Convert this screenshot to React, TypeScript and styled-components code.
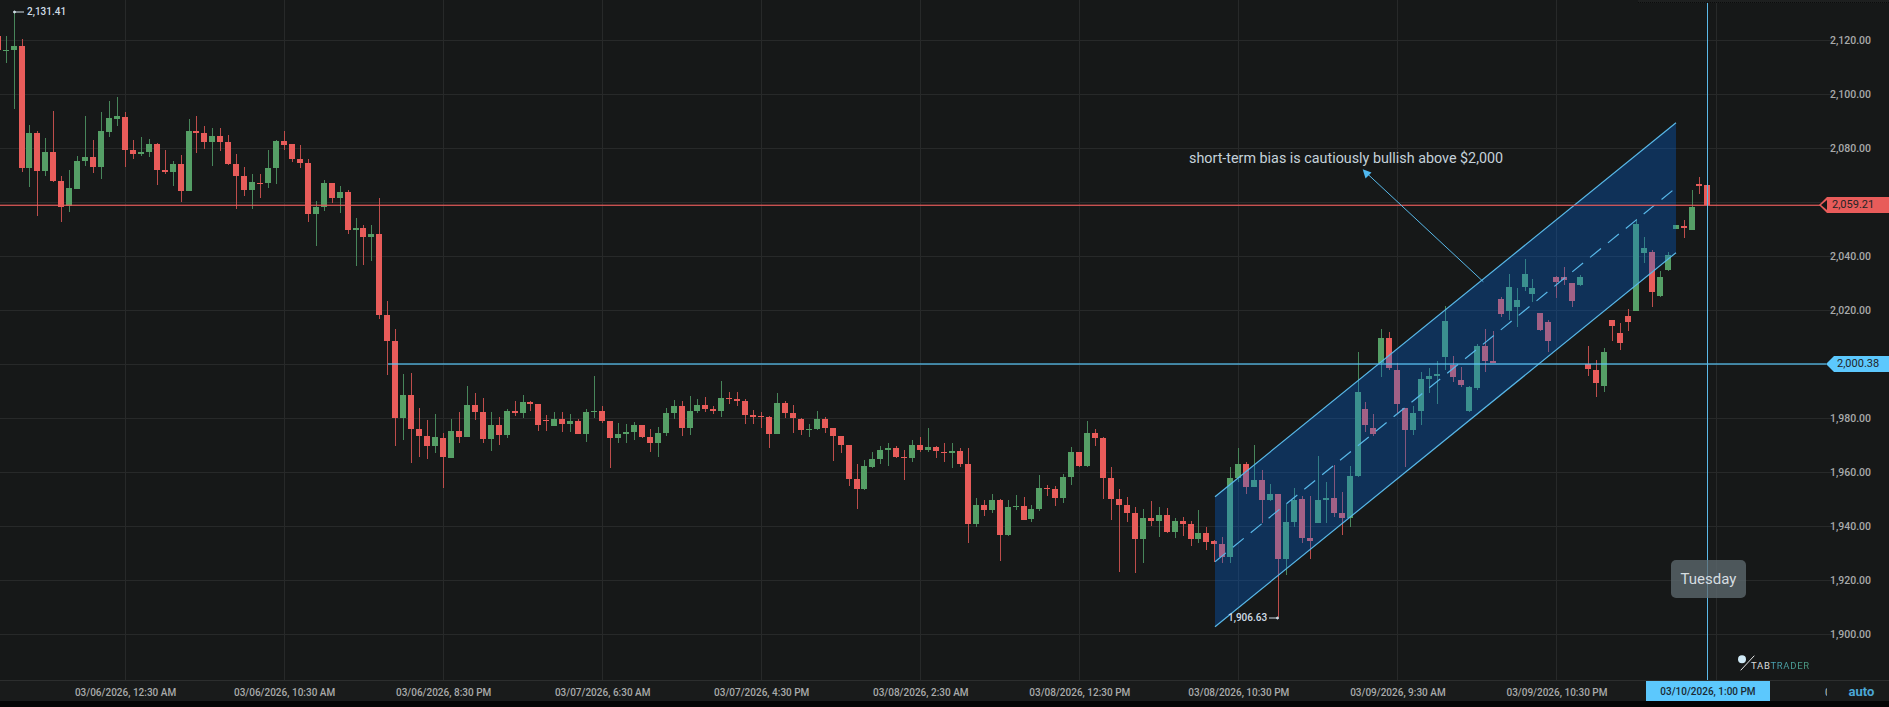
import styled, { createGlobalStyle } from "styled-components";

const GlobalStyle = createGlobalStyle`
	html, body {
		margin: 0;
		background: #040505;
	}
	body {
		font-family: Roboto, "Liberation Sans", sans-serif;
	}
`;

const Page = styled.div`
	width: 1889px;
	height: 707px;
	overflow: hidden;
	display: flex;
	flex-direction: column;
`;

const Plot = styled.div`
	position: relative;
	height: 680px;
	background: #161818;
	flex: none;
`;

const ChartSvg = styled.svg`
	display: block;
`;

const TopStrip = styled.div`
	position: absolute;
	top: 0;
	left: 1638px;
	right: 0;
	height: 2px;
	background: #1d1f1f;
	border-bottom: 1px dotted #0b0c0c;
`;

const PriceAxis = styled.div`
	position: absolute;
	top: 14px;
	right: 18px;
	display: flex;
	flex-direction: column;
`;

const PriceLabel = styled.div`
	height: 54px;
	line-height: 54px;
	font-size: 10.5px;
	font-weight: 500;
	color: #a8aaaa;
`;

const HighLow = styled.div<{ $x: number; $y: number }>`
	position: absolute;
	left: ${(p) => p.$x}px;
	top: ${(p) => p.$y}px;
	font-size: 10px;
	font-weight: 500;
	line-height: 12px;
	color: #d0dde6;
`;

const Note = styled.div`
	position: absolute;
	left: 1189px;
	top: 149px;
	font-size: 14.33px;
	line-height: 18px;
	color: #c5d2da;
	white-space: nowrap;
`;

const PriceTag = styled.div<{ $bg: string; $y: number; $left: number; $pad: number }>`
	position: absolute;
	left: ${(p) => p.$left}px;
	right: 0;
	top: ${(p) => p.$y}px;
	height: 16px;
	line-height: 16px;
	padding-left: ${(p) => p.$pad}px;
	font-size: 11px;
	color: #1f2426;
	background: ${(p) => p.$bg};
	clip-path: polygon(8px 0, 100% 0, 100% 100%, 8px 100%, 0 50%);
`;

const HollowTip = styled.span`
	position: absolute;
	left: 2px;
	top: 3px;
	width: 6px;
	height: 10px;
	background: #161818;
	clip-path: polygon(100% 0, 100% 100%, 0 50%);
`;

const DayBubble = styled.div`
	position: absolute;
	left: 1671px;
	top: 560px;
	width: 75px;
	height: 38px;
	display: flex;
	align-items: center;
	justify-content: center;
	border-radius: 5px;
	background: rgba(96, 108, 114, 0.75);
	font-size: 15px;
	color: #d6dde0;
`;

const LogoText = styled.div`
	position: absolute;
	left: 1751px;
	top: 661px;
	font-size: 9.5px;
	letter-spacing: 0.7px;
	line-height: 10px;
	color: #d9dcdc;
`;

const LogoAccent = styled.span`
	background: linear-gradient(90deg, #4aa6bd, #4c9a7e);
	-webkit-background-clip: text;
	background-clip: text;
	color: transparent;
`;

const TimeAxis = styled.div`
	height: 21px;
	box-sizing: border-box;
	flex: none;
	background: #191b1b;
	border-top: 1px solid #2c2e2e;
	display: flex;
`;

const TimeTrack = styled.div`
	flex: none;
	width: 1827px;
	padding-left: 46px;
	box-sizing: border-box;
	display: flex;
	overflow: hidden;
`;

const TimeLabel = styled.div`
	flex: none;
	width: 159.05px;
	text-align: center;
	font-size: 10px;
	font-weight: 500;
	line-height: 23px;
	color: #a8aaaa;
	white-space: nowrap;
`;

const CurrentTime = styled.div`
	flex: none;
	margin-left: 9.5px;
	width: 124px;
	height: 20px;
	background: #5cc8fd;
	font-size: 10px;
	font-weight: 500;
	line-height: 22px;
	text-align: center;
	color: #1b2a33;
	white-space: nowrap;
`;

const ClippedLabel = styled.div`
	flex: none;
	margin-left: 55px;
	width: 2px;
	overflow: hidden;
	font-size: 10px;
	font-weight: 500;
	line-height: 23px;
	color: #a8aaaa;
`;

const ScaleMode = styled.div`
	flex: 1;
	display: flex;
	justify-content: center;
	padding-left: 7px;
	font-size: 13px;
	font-weight: 700;
	line-height: 21px;
	color: #4ba7d6;
`;

type Row = [number, number, number, number, number];

// y values are in thirds of a pixel: wick top, wick bottom, body top, body bottom, 1 = up
const shift = (rows: Row[], by: number): Row[] =>
	rows.map(([a, b, c, d, up]) => [a + by, b + by, c + by, d + by, up]);

const candles: Row[] = [
	[108, 150, 108, 150, 0], [108, 189, 150, 153, 1], [33, 327, 139, 150, 1], [117, 516, 138, 503, 0],
	[375, 560, 399, 504, 1], [393, 648, 399, 514, 0], [415, 528, 455, 514, 1], [333, 545, 455, 544, 0],
	[528, 665, 544, 620, 0], [510, 636, 565, 618, 1], [468, 567, 482, 566, 1], [347, 498, 470, 482, 1],
	[421, 519, 471, 500, 0], [336, 537, 394, 500, 1], [302, 411, 355, 395, 1], [291, 378, 349, 356, 1],
	[336, 501, 350, 450, 0], [420, 477, 450, 462, 0], [411, 468, 455, 462, 1], [417, 471, 433, 455, 1],
	[430, 555, 433, 511, 0], [450, 522, 511, 515, 0], [484, 558, 493, 515, 1], [465, 606, 493, 572, 0],
	[358, 573, 393, 572, 1], [348, 459, 393, 399, 0], [378, 447, 399, 426, 0], [385, 497, 407, 427, 1],
	[384, 454, 407, 425, 0], [405, 495, 425, 492, 0], [462, 627, 492, 528, 0], [501, 588, 528, 570, 0],
	[522, 627, 547, 570, 1], [522, 594, 548, 550, 0], [450, 563, 504, 549, 1], [419, 552, 423, 504, 1],
	[393, 451, 423, 434, 0], [432, 485, 433, 477, 0], [435, 504, 477, 489, 0], [477, 665, 489, 643, 0],
	[603, 737, 621, 643, 1], [541, 633, 550, 620, 1], [549, 608, 550, 594, 0], [558, 638, 576, 594, 1],
	[570, 701, 576, 690, 0], [654, 798, 684, 690, 1], [675, 795, 684, 710, 0], [675, 783, 702, 710, 1],
	[594, 957, 702, 945, 0], [903, 1125, 945, 1023, 0], [987, 1338, 1023, 1255, 0], [1122, 1320, 1185, 1255, 1],
	[1120, 1388, 1185, 1286, 0], [1225, 1372, 1286, 1308, 0], [1260, 1377, 1308, 1337, 0], [1242, 1358, 1312, 1337, 1],
	[1300, 1465, 1313, 1372, 0], [1257, 1375, 1294, 1373, 1],
	...shift([
		[636, 728, 694, 711, 0], [558, 711, 615, 711, 1], [580, 660, 615, 636, 0], [594, 728, 636, 716, 0],
		[636, 753, 675, 716, 1], [651, 735, 675, 706, 0], [627, 714, 633, 706, 1], [603, 648, 634, 640, 0],
		[585, 654, 605, 640, 1], [603, 633, 605, 612, 0], [612, 692, 612, 676, 0], [645, 692, 660, 661, 0],
		[636, 679, 657, 677, 1], [636, 696, 657, 671, 0], [642, 696, 662, 671, 1], [657, 702, 662, 702, 0],
		[627, 726, 636, 702, 1], [529, 654, 633, 637, 1], [618, 668, 633, 664, 0], [663, 805, 664, 715, 0],
		[670, 730, 702, 715, 1], [672, 730, 697, 702, 1],
	], 600),
	...shift([
		[185, 240, 195, 217, 1], [195, 235, 195, 231, 0], [207, 276, 230, 249, 0], [202, 291, 218, 250, 1],
		[145, 228, 159, 218, 1], [120, 177, 139, 159, 1], [124, 228, 139, 204, 0], [108, 226, 153, 204, 1],
		[118, 159, 134, 154, 1], [111, 155, 134, 148, 0], [137, 162, 148, 153, 0], [63, 170, 114, 153, 1],
		[95, 132, 114, 117, 0], [97, 138, 116, 122, 0], [118, 191, 124, 165, 0], [151, 192, 166, 170, 0],
		[156, 204, 169, 171, 0], [168, 265, 171, 222, 0], [99, 222, 129, 222, 1], [123, 174, 129, 160, 0],
		[135, 218, 160, 175, 0], [175, 225, 176, 209, 0], [192, 231, 208, 210, 1], [153, 209, 176, 208, 1],
		[172, 219, 176, 204, 0], [204, 303, 205, 228, 0], [228, 279, 228, 255, 0], [255, 378, 255, 357, 0],
		[312, 447, 357, 387, 0], [300, 390, 319, 387, 1], [276, 324, 296, 320, 1], [259, 312, 270, 296, 1],
		[249, 318, 263, 270, 1], [258, 294, 263, 291, 0], [270, 360, 292, 294, 0], [241, 305, 255, 294, 1],
		[231, 276, 255, 270, 0], [205, 276, 262, 271, 1], [258, 295, 262, 274, 0], [249, 306, 275, 278, 0],
		[250, 324, 274, 278, 1], [264, 321, 274, 312, 0], [264, 548, 312, 491, 0], [414, 500, 435, 491, 1],
		[420, 468, 435, 450, 0], [402, 459, 420, 450, 1], [418, 603, 420, 525, 0], [420, 527, 441, 525, 1],
		[405, 450, 437, 441, 1], [410, 480, 437, 480, 0], [435, 487, 447, 478, 1], [345, 453, 384, 447, 1],
		[375, 408, 383, 387, 0], [378, 438, 387, 413, 0], [342, 428, 351, 413, 1], [260, 375, 276, 351, 1],
		[276, 321, 276, 318, 0], [184, 321, 219, 318, 1], [207, 258, 219, 233, 0], [231, 416, 233, 354, 0],
		[321, 480, 354, 417, 0], [387, 636, 417, 435, 0], [411, 486, 435, 458, 0], [441, 639, 458, 537, 0],
		[446, 609, 475, 537, 1], [422, 498, 475, 483, 0], [441, 531, 465, 483, 1], [444, 518, 465, 517, 0],
		[474, 534, 484, 517, 1], [471, 528, 484, 492, 0], [483, 558, 492, 536, 0], [450, 549, 520, 536, 1],
		[501, 570, 520, 545, 0], [540, 606, 544, 552, 0], [531, 608, 552, 590, 0], [322, 608, 354, 590, 1],
	], 1080),
	...shift([
		[205, 305, 252, 294, 1], [246, 342, 252, 321, 0], [195, 322, 300, 321, 1], [270, 428, 300, 360, 0],
		[312, 362, 342, 361, 1], [341, 710, 341, 537, 0], [372, 585, 426, 537, 1], [325, 440, 360, 426, 1],
		[348, 488, 358, 473, 0], [348, 536, 473, 484, 0], [228, 430, 361, 430, 1], [307, 430, 354, 360, 1],
		[255, 410, 354, 400, 0], [336, 465, 400, 414, 0], [258, 440, 288, 414, 1], [-83, 290, 36, 288, 1],
		[66, 155, 87, 136, 0], [102, 168, 144, 162, 0],
	], 1140),
	[987, 1130, 1014, 1090, 1], [996, 1110, 1014, 1105, 0], [1090, 1240, 1110, 1213, 0], [1224, 1400, 1224, 1290, 0],
	[1218, 1304, 1239, 1290, 1], [1115, 1276, 1138, 1233, 1], [1105, 1180, 1129, 1136, 1], [1082, 1212, 1121, 1129, 1],
	[918, 1110, 962, 1071, 1], [1068, 1146, 1095, 1130, 0], [1100, 1160, 1140, 1154, 0], [1158, 1236, 1161, 1232, 1],
	[1032, 1170, 1039, 1163, 1], [986, 1115, 1039, 1083, 0], [993, 1090, 1084, 1088, 0], [890, 952, 897, 943, 0],
	[823, 960, 862, 932, 1], [865, 982, 901, 922, 1], [777, 872, 821, 862, 1], [838, 905, 865, 881, 1],
	[938, 992, 940, 990, 0], [960, 1055, 966, 1022, 0], [827, 895, 830, 846, 0], [800, 855, 832, 841, 0],
	[848, 920, 850, 902, 0], [825, 858, 832, 855, 1], [1038, 1128, 1092, 1108, 0], [1080, 1190, 1110, 1148, 0],
	[1045, 1175, 1057, 1157, 1], [960, 1023, 961, 977, 0], [970, 1050, 999, 1030, 0], [928, 992, 948, 966, 0],
	[658, 933, 672, 933, 1], [712, 790, 744, 760, 1], [750, 920, 756, 875, 0], [812, 890, 831, 888, 1],
	[756, 812, 765, 810, 1], [675, 688, 676, 688, 1], [660, 714, 677, 685, 0], [570, 690, 621, 690, 1],
	[531, 582, 553, 557, 0], [554, 616, 554, 616, 0],
];

const gridX = Array.from({ length: 11 }, (_, i) => 125.5 + i * 159.05);
// the tags sit on top of 2,060.00 and 2,000.00, so those rows stay empty
const prices = ["2,120.00", "2,100.00", "2,080.00", "", "2,040.00", "2,020.00", "", "1,980.00", "1,960.00", "1,940.00", "1,920.00", "1,900.00"];
const times = [
	"03/06/2026, 12:30 AM", "03/06/2026, 10:30 AM", "03/06/2026, 8:30 PM", "03/07/2026, 6:30 AM",
	"03/07/2026, 4:30 PM", "03/08/2026, 2:30 AM", "03/08/2026, 12:30 PM", "03/08/2026, 10:30 PM",
	"03/09/2026, 9:30 AM", "03/09/2026, 10:30 PM",
];

const Candles = () => (
	<g shapeRendering="crispEdges">
		{candles.map(([wickTop, wickBottom, top, bottom, up], i) => {
			const left = Math.round(-2.35 + i * 7.9525 - 3);
			return (
				<g key={i}>
					<rect x={left + 3} y={wickTop / 3} width={1} height={(wickBottom - wickTop) / 3} fill={up ? "#47855a" : "#bd4d4b"} />
					<rect x={left} y={top / 3} width={6} height={Math.max((bottom - top) / 3, 1)} fill={up ? "#559f66" : "#e85c5a"} />
				</g>
			);
		})}
	</g>
);

const Channel = () => (
	<g>
		<polygon points="1215,496.7 1676,122.7 1676,252.7 1215,626.7" fill="rgba(0, 110, 240, 0.3)" />
		<g stroke="#58b8e8" strokeWidth={1.2}>
			<line x1={1215} y1={496.7} x2={1676} y2={122.7} />
			<line x1={1215} y1={626.7} x2={1676} y2={252.7} />
			<line x1={1215} y1={561.7} x2={1676} y2={187.7} strokeDasharray="14 9" />
		</g>
	</g>
);

const App = () => {
	return (
		<Page>
			<GlobalStyle />
			<Plot>
				<ChartSvg width={1889} height={680}>
					<g stroke="#272929" strokeWidth={1} shapeRendering="crispEdges">
						{gridX.map((x) => (
							<line key={x} x1={x} y1={0} x2={x} y2={680} />
						))}
						{prices.map((_, i) => (
							<line key={i} x1={0} y1={40.3 + i * 54} x2={1832} y2={40.3 + i * 54} />
						))}
					</g>
					<Candles />
					<Channel />
					<rect x={0} y={204.6} width={1820} height={1.4} fill="rgba(232, 92, 90, 0.85)" />
					<rect x={388} y={363} width={1438} height={2} fill="rgba(90, 200, 250, 0.6)" />
					<rect x={1707} y={3} width={1} height={677} fill="#5bb9e8" />
					<line x1={1483.3} y1={281.7} x2={1366} y2={172.5} stroke="#58b8e8" strokeWidth={1} />
					<polygon points="1362.7,169.3 1371.5,172.5 1365.5,178.6" fill="#4fb8f0" />
					<g stroke="#d0dde6" strokeWidth={1} fill="#d0dde6">
						<line x1={14} y1={12} x2={24} y2={12} />
						<circle cx={14.5} cy={12} r={1} />
						<line x1={1269} y1={618} x2={1278} y2={618} />
						<circle cx={1277.5} cy={618} r={1} />
					</g>
					<g>
						<circle cx={1742} cy={659.3} r={4} fill="#cfe9f5" />
						<line x1={1754.3} y1={655.7} x2={1740.7} y2={670.3} stroke="#e4e6e6" strokeWidth={1} />
					</g>
				</ChartSvg>
				<TopStrip />
				<PriceAxis>
					{prices.map((price, i) => (
						<PriceLabel key={i}>{price}</PriceLabel>
					))}
				</PriceAxis>
				<HighLow $x={27} $y={6}>2,131.41</HighLow>
				<HighLow $x={1228} $y={612}>1,906.63</HighLow>
				<Note>short-term bias is cautiously bullish above $2,000</Note>
				<PriceTag $bg="#e85c5a" $y={197} $left={1819} $pad={13}>
					<HollowTip />
					2,059.21
				</PriceTag>
				<PriceTag $bg="#5cc8fd" $y={356} $left={1826} $pad={11}>2,000.38</PriceTag>
				<DayBubble>Tuesday</DayBubble>
				<LogoText>
					TAB<LogoAccent>TRADER</LogoAccent>
				</LogoText>
			</Plot>
			<TimeAxis>
				<TimeTrack>
					{times.map((time) => (
						<TimeLabel key={time}>{time}</TimeLabel>
					))}
					<CurrentTime>03/10/2026, 1:00 PM</CurrentTime>
					<ClippedLabel>0</ClippedLabel>
				</TimeTrack>
				<ScaleMode>auto</ScaleMode>
			</TimeAxis>
		</Page>
	);
};

export default App;
